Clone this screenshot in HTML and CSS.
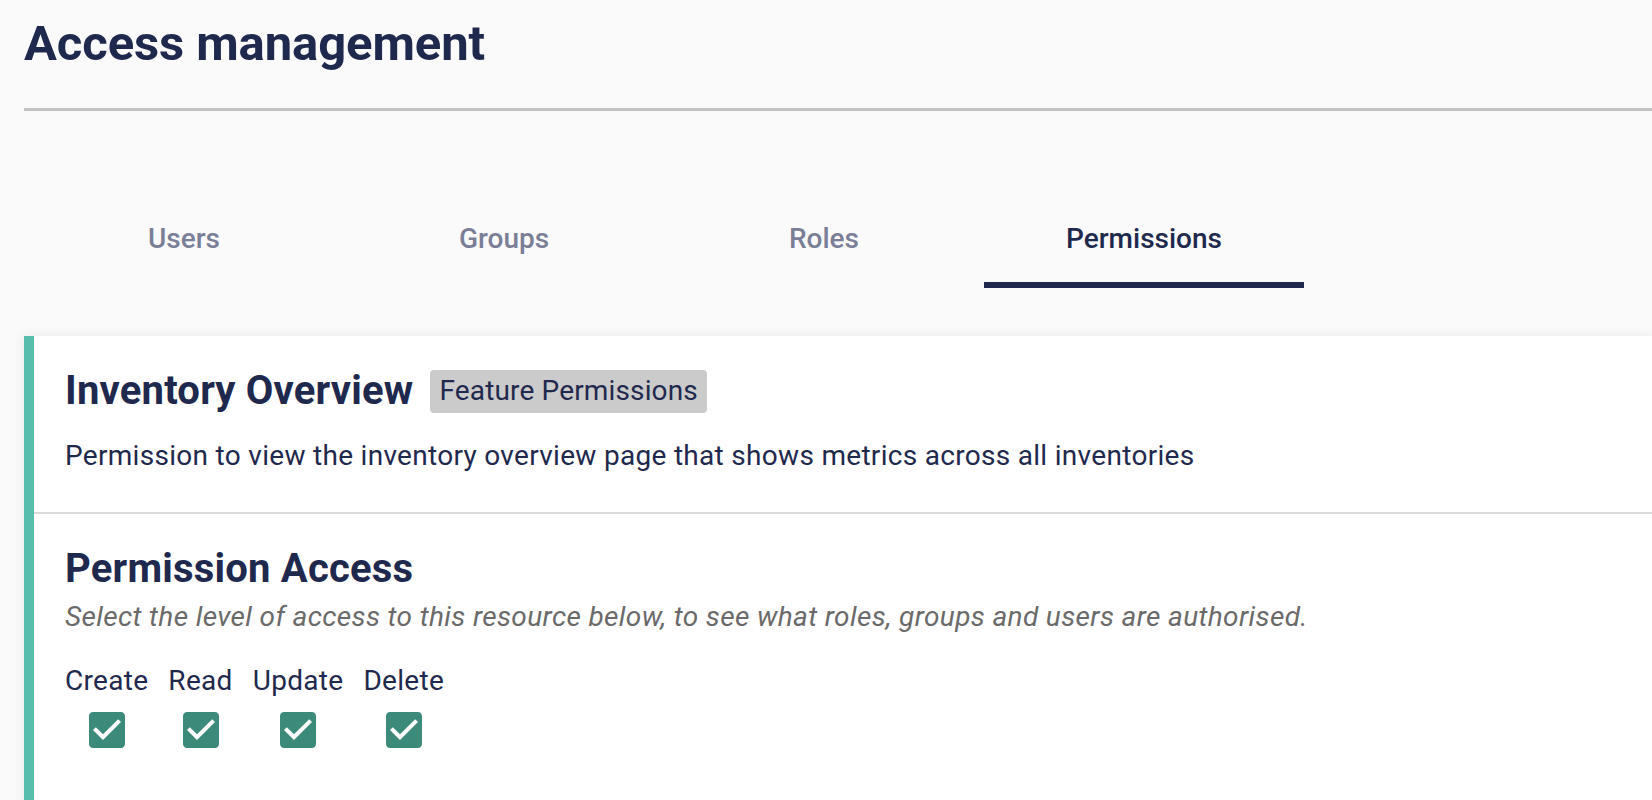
FILE: index.html
```html
<!DOCTYPE html>
<html>
<head>
  <title>Access management</title>
  <meta charset="UTF-8">
  <meta name="viewport" content="width=device-width, initial-scale=1.0">
  <link rel="stylesheet" href="styles.css">
</head>
<body>

  <div class="header">
    <h1>Access management</h1>
  </div>

  <nav class="tabs">
    <a class="tab">Users</a>
    <a class="tab">Groups</a>
    <a class="tab">Roles</a>
    <a class="tab active">Permissions</a>
  </nav>

  <div class="card">
    <section class="card-section">
      <div class="title-row">
        <h2>Inventory Overview</h2>
        <span class="badge">Feature Permissions</span>
      </div>
      <p class="description">Permission to view the inventory overview page that shows metrics across all inventories</p>
    </section>

    <section class="card-section access">
      <h2>Permission Access</h2>
      <p class="hint">Select the level of access to this resource below, to see what roles, groups and users are authorised.</p>
      <div class="crud">
        <label class="crud-item">
          <span>Create</span>
          <svg class="check" viewBox="3 3 18 18"><path d="M19 3H5c-1.11 0-2 .9-2 2v14c0 1.1.89 2 2 2h14c1.11 0 2-.9 2-2V5c0-1.1-.89-2-2-2zm-9 14l-5-5 1.41-1.41L10 14.17l7.59-7.59L19 8l-9 9z"/></svg>
        </label>
        <label class="crud-item">
          <span>Read</span>
          <svg class="check" viewBox="3 3 18 18"><path d="M19 3H5c-1.11 0-2 .9-2 2v14c0 1.1.89 2 2 2h14c1.11 0 2-.9 2-2V5c0-1.1-.89-2-2-2zm-9 14l-5-5 1.41-1.41L10 14.17l7.59-7.59L19 8l-9 9z"/></svg>
        </label>
        <label class="crud-item">
          <span>Update</span>
          <svg class="check" viewBox="3 3 18 18"><path d="M19 3H5c-1.11 0-2 .9-2 2v14c0 1.1.89 2 2 2h14c1.11 0 2-.9 2-2V5c0-1.1-.89-2-2-2zm-9 14l-5-5 1.41-1.41L10 14.17l7.59-7.59L19 8l-9 9z"/></svg>
        </label>
        <label class="crud-item">
          <span>Delete</span>
          <svg class="check" viewBox="3 3 18 18"><path d="M19 3H5c-1.11 0-2 .9-2 2v14c0 1.1.89 2 2 2h14c1.11 0 2-.9 2-2V5c0-1.1-.89-2-2-2zm-9 14l-5-5 1.41-1.41L10 14.17l7.59-7.59L19 8l-9 9z"/></svg>
        </label>
      </div>
    </section>
  </div>

</body>
</html>
```

FILE: styles.css
```css
/* Reset styles */
* {
  margin: 0;
  padding: 0;
  box-sizing: border-box;
}

/* Base styles */
body {
  font-family: 'Roboto', 'Liberation Sans', sans-serif;
  background-color: #fafafa;
  color: #1f294d;
  font-size: 28px;
  line-height: 34px;
  letter-spacing: 0.3px;
  overflow: hidden;
}

h1, h2 {
  font-weight: 700;
}

/* Header */
.header {
  margin-left: 24px;
  padding: 14px 0 34px;
  border-bottom: 3px solid #c4c3c4;
}

.header h1 {
  font-size: 49px;
  line-height: 60px;
  letter-spacing: -0.1px;
}

/* Tabs */
.tabs {
  display: flex;
  margin: 111px 0 0 24px;
}

.tab {
  width: 320px;
  text-align: center;
  font-weight: 500;
  color: #7a7f98;
  letter-spacing: 0;
  padding-bottom: 26px;
  border-bottom: 6px solid transparent;
  cursor: pointer;
}

.tab.active {
  color: #1f294d;
  border-bottom-color: #1f294d;
}

/* Card */
.card {
  margin: 48px 0 0 24px;
  background-color: #fff;
  border-left: 10px solid #57bead;
  box-shadow: 0 0 12px rgba(0, 0, 0, 0.08);
}

.card-section {
  padding: 31px 0 39px 31px;
  border-bottom: 2px solid #d9d9d9;
}

.card-section h2 {
  font-size: 40px;
  line-height: 48px;
  letter-spacing: 0.2px;
}

.title-row {
  display: flex;
  align-items: center;
  gap: 17px;
}

.badge {
  background-color: #cbcbcb;
  border-radius: 4px;
  padding: 4px 9px 5px;
  line-height: 34px;
  letter-spacing: 0.15px;
}

.description {
  margin-top: 24px;
}

.access {
  border-bottom: none;
  padding-bottom: 60px;
}

.hint {
  margin-top: 7px;
  font-style: italic;
  color: #6a6a6a;
  letter-spacing: 0.37px;
}

.crud {
  display: flex;
  gap: 20px;
  margin-top: 30px;
}

.crud-item {
  display: flex;
  flex-direction: column;
  align-items: center;
}

.check {
  width: 36px;
  height: 36px;
  margin-top: 14px;
  fill: #3c8a7a;
}
```
